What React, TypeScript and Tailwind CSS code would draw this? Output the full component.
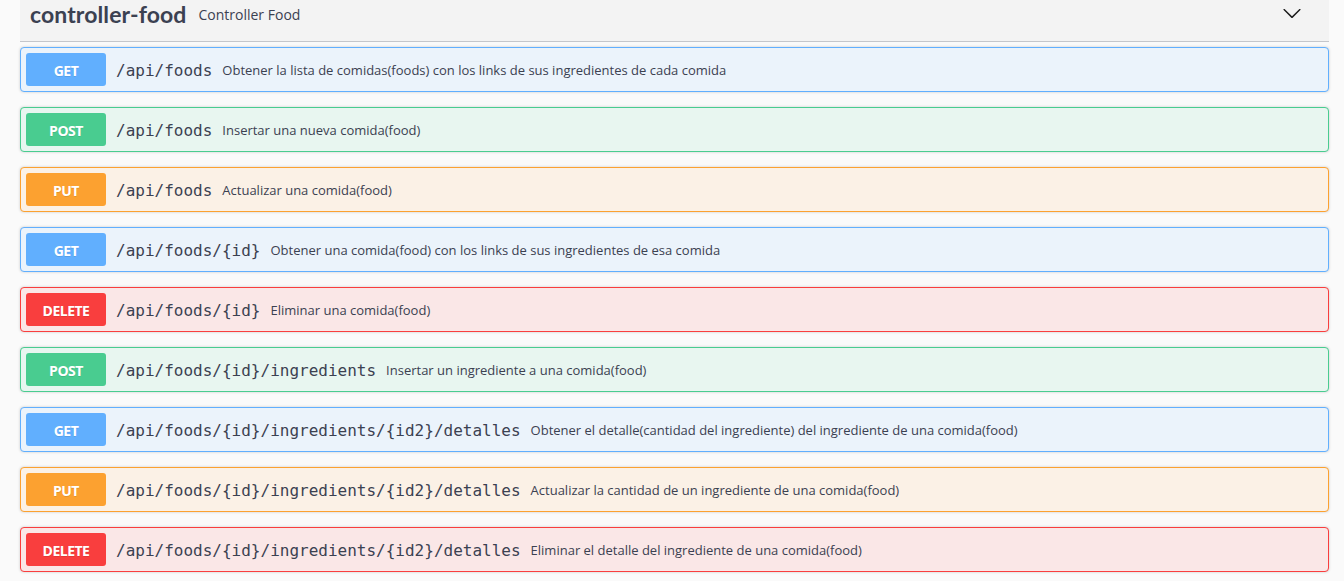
import { ReactNode } from "react";

type Method = "GET" | "POST" | "PUT" | "DELETE";

const methodStyles: Record<Method, { block: string; badge: string }> = {
  GET: { block: "bg-[#ebf3fb] border-[#61affe]", badge: "bg-[#61affe]" },
  POST: { block: "bg-[#e8f6f0] border-[#49cc90]", badge: "bg-[#49cc90]" },
  PUT: { block: "bg-[#fbf1e6] border-[#fca130]", badge: "bg-[#fca130]" },
  DELETE: { block: "bg-[#fae7e7] border-[#f93e3e]", badge: "bg-[#f93e3e]" },
};

const operations: { method: Method; path: string; summary: string }[] = [
  {
    method: "GET",
    path: "/api/foods",
    summary:
      "Obtener la lista de comidas(foods) con los links de sus ingredientes de cada comida",
  },
  { method: "POST", path: "/api/foods", summary: "Insertar una nueva comida(food)" },
  { method: "PUT", path: "/api/foods", summary: "Actualizar una comida(food)" },
  {
    method: "GET",
    path: "/api/foods/{id}",
    summary:
      "Obtener una comida(food) con los links de sus ingredientes de esa comida",
  },
  { method: "DELETE", path: "/api/foods/{id}", summary: "Eliminar una comida(food)" },
  {
    method: "POST",
    path: "/api/foods/{id}/ingredients",
    summary: "Insertar un ingrediente a una comida(food)",
  },
  {
    method: "GET",
    path: "/api/foods/{id}/ingredients/{id2}/detalles",
    summary:
      "Obtener el detalle(cantidad del ingrediente) del ingrediente de una comida(food)",
  },
  {
    method: "PUT",
    path: "/api/foods/{id}/ingredients/{id2}/detalles",
    summary: "Actualizar la cantidad de un ingrediente de una comida(food)",
  },
  {
    method: "DELETE",
    path: "/api/foods/{id}/ingredients/{id2}/detalles",
    summary: "Eliminar el detalle del ingrediente de una comida(food)",
  },
];

function Chevron() {
  return (
    <svg width="20" height="20" viewBox="0 0 20 20" className="fill-[#1b1b1b]">
      <path d="M17.418 6.109c.272-.268.709-.268.979 0s.271.701 0 .969l-7.908 7.83c-.27.268-.707.268-.979 0l-7.908-7.83c-.27-.268-.27-.701 0-.969.271-.268.709-.268.979 0L10 13.25l7.418-7.141z" />
    </svg>
  );
}

function Opblock({
  method,
  children,
}: {
  method: Method;
  children: ReactNode;
}) {
  const s = methodStyles[method];
  return (
    <div
      className={`mb-[15px] flex h-[45px] items-center rounded-[4px] border p-[5px] shadow-[0_0_3px_rgba(0,0,0,0.19)] ${s.block}`}
    >
      <span
        className={`flex h-[33px] w-[80px] shrink-0 items-center justify-center rounded-[3px] pt-[1px] text-[14px] font-bold tracking-[-0.5px] text-white [text-shadow:0_1px_0_rgba(0,0,0,0.1)] ${s.badge}`}
      >
        {method}
      </span>
      {children}
    </div>
  );
}

export default function App() {
  return (
    <div className="min-h-screen bg-[#fafafa] pl-[20px] pr-[15px] font-['Open_Sans',sans-serif] text-[#3b4151]">
      {/* tag header */}
      <div className="mb-[5px] flex h-[42px] items-start border-b border-[#c4c6cb] bg-[#f3f3f3] pl-[10px] pr-[27px]">
        <h3 className="font-['Lato',sans-serif] text-[23px] font-bold leading-[28px] tracking-[0.1px]">
          controller-food
        </h3>
        <span className="ml-[12px] mt-[5px] text-[14px] leading-[20px]">
          Controller Food
        </span>
        <span className="ml-auto mt-[3px]">
          <Chevron />
        </span>
      </div>

      {/* operations */}
      <div>
        {operations.map((op, i) => (
          <Opblock key={i} method={op.method}>
            <span className="px-[10px] pt-[2px] font-['DejaVu_Sans_Mono',monospace] text-[16px] font-normal">
              {op.path}
            </span>
            <span className="pt-[2px] text-[13px]">{op.summary}</span>
          </Opblock>
        ))}
      </div>
    </div>
  );
}
